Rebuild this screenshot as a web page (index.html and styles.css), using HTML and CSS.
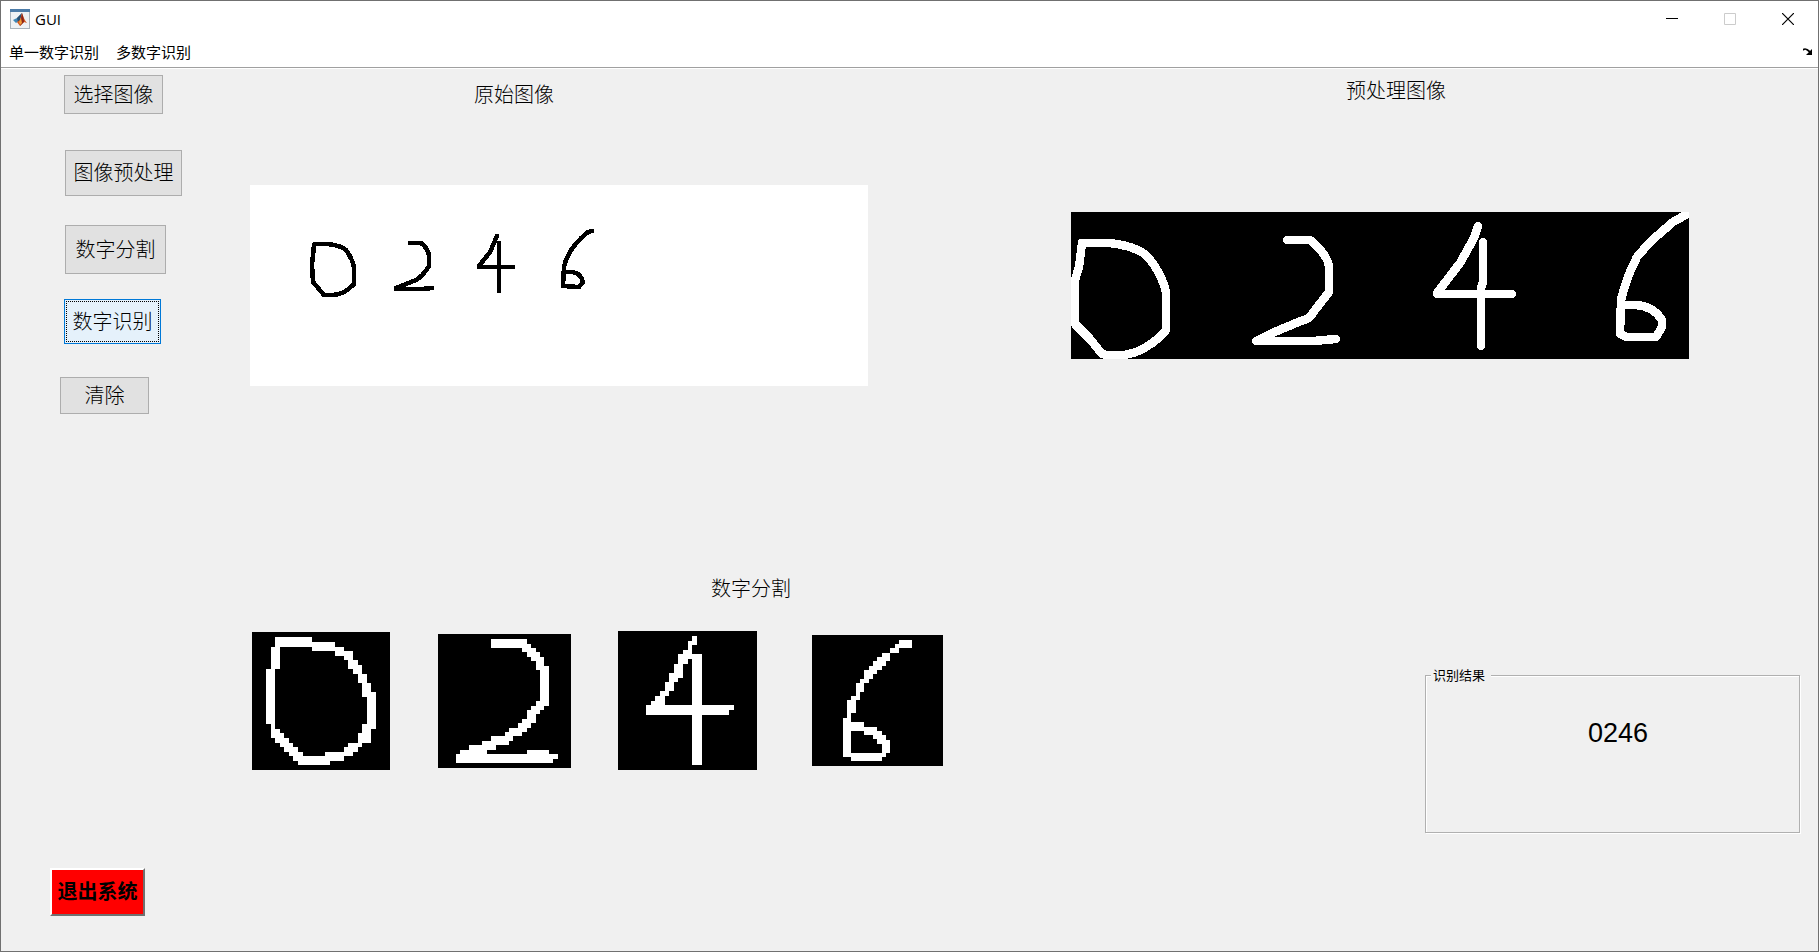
FILE: index.html
```html
<!DOCTYPE html>
<html lang="zh-CN">

<head>
    <meta charset="utf-8">
    <meta name="viewport" content="width=device-width, initial-scale=1">
    <title>GUI</title>
    <link rel="stylesheet" href="styles.css">
</head>

<body>
    <div class="window">
        <header>
            <div class="titlebar">
                <svg class="app-icon" width="20" height="20" viewBox="0 0 20 20">
                    <rect x="0.5" y="0.5" width="19" height="19" fill="#eef1f4" stroke="#a9b2bb"/>
                    <rect x="0" y="0" width="20" height="3" fill="#4c7ba8"/>
                    <path d="M3 11L7 9L10 6L12 4L9 12L6 14Z" fill="#3f86b5"/>
                    <path d="M7 9L10 6L12 4L10 12L8 13Z" fill="#284f73"/>
                    <path d="M12 4C13 7 15 12 17 14L14 13L10 17L7 13L10 11Z" fill="#d2561f"/>
                    <path d="M12 4C13 7 14 10 14 13L10 17L11 10Z" fill="#8e2418"/>
                    <path d="M11 9L12 14L10 16L9 13Z" fill="#f09a35"/>
                </svg>
                <span class="title">GUI</span>
                <div class="controls">
                    <button aria-label="最小化">
                        <svg width="12" height="12" viewBox="0 0 12 12"><path d="M0 5.5H12" stroke="#000"/></svg>
                    </button>
                    <button aria-label="最大化" disabled>
                        <svg width="12" height="12" viewBox="0 0 12 12"><path d="M.5 .5H11.5V11.5H.5Z" fill="none" stroke="#ccc"/></svg>
                    </button>
                    <button aria-label="关闭">
                        <svg width="12" height="12" viewBox="0 0 12 12"><path d="M0 0L12 12M12 0L0 12" stroke="#000" stroke-width="1.2"/></svg>
                    </button>
                </div>
            </div>
            <nav class="menubar">
                <button>单一数字识别</button>
                <button>多数字识别</button>
                <svg class="dock" width="10" height="8" viewBox="0 0 10 8">
                    <path d="M0 2C2 0 4 1 7 4" fill="none" stroke="#000" stroke-width="1.8"/>
                    <path d="M9 1V7H3Z"/>
                </svg>
            </nav>
        </header>

        <main>
            <aside class="sidebar">
                <button class="btn select">选择图像</button>
                <button class="btn preprocess">图像预处理</button>
                <button class="btn split">数字分割</button>
                <button class="btn recognize">数字识别</button>
                <button class="btn clear">清除</button>
                <button class="btn exit">退出系统</button>
            </aside>

            <div class="workspace">
                <div class="images">
                    <figure class="original">
                        <figcaption>原始图像</figcaption>
                        <svg viewBox="0 0 618 201" shape-rendering="crispEdges">
                            <rect width="618" height="201" fill="#fff"/>
                            <g fill="none" stroke="#000" stroke-width="4.5" stroke-linecap="round" stroke-linejoin="round">
                                <path d="M65 59L77 59Q90 60 96 65Q102 73 104 82V99Q94 110 82 110H74L63 97L62 80L64 60Z"/>
                                <path d="M160 58H171Q179 64 179 72V81Q172 92 166 95L146 103V104H172L182 103"/>
                                <path d="M247 51L240 67L229 81V82H263M249 58V106"/>
                                <path d="M342 46L338 47Q318 63 314 82L313 101L329 102L333 97Q331 88 322 87H314"/>
                            </g>
                        </svg>
                    </figure>
                    <figure class="processed">
                        <figcaption>预处理图像</figcaption>
                        <svg viewBox="0 0 618 147" shape-rendering="crispEdges">
                            <rect width="618" height="147" fill="#000"/>
                            <g fill="none" stroke="#fff" stroke-width="8.5" stroke-linecap="round" stroke-linejoin="round">
                                <path d="M11 31H38Q66 34 77 45Q91 62 95 80V118Q84 132 65 140L54 143H36L31 142L19 127L4 112V68L8 55Z"/>
                                <path d="M216 28H239Q256 42 258 54V80L244 98Q238 108 230 109L206 119L185 129H242L265 127"/>
                                <path d="M407 14L403 26L389 51L366 81V82H441M412 30V70L410 76V134"/>
                                <path d="M618 1L602 10L579 30L566 45Q555 66 550 88L549 122L555 125H585L591 115V108Q582 94 565 93H550"/>
                            </g>
                        </svg>
                    </figure>
                </div>

                <div class="results">
                    <section class="segments">
                        <h2>数字分割</h2>
                        <div class="tiles">
                            <svg width="138" height="138" viewBox="36 33 414 414" shape-rendering="crispEdges">
                                <path d="M105 48H216V63H285V78H312V90H339V117H354V132H366V159H381V186H393V213H408V324H393V366H366V378H354V393H339V405H312V420H270V432H174V420H159V405H147V393H132V378H120V366H105V351H93V309H78V144H93V78H105ZM120 78V144H105V324H120V336H132V351H147V366H159V378H174V393H189V405H255V393H312V378H324V366H354V336H366V309H381V228H366V186H354V159H339V144H324V117H312V105H285V90H216V78Z"/>
                            </svg>
                            <svg width="133" height="134" viewBox="54 39 399 402" shape-rendering="crispEdges">
                                <path d="M213 54H321V69H333V81H348V93H360V108H372V135H387V255H372V267H360V279H348V306H333V321H321V333H306V345H279V360H267V372H228V387H201V399H321V387H387V399H414V414H399V426H108V399H120V387H147V372H186V360H213V345H255V333H267V321H294V306H306V294H321V267H333V255H348V240H360V147H348V120H333V108H321V93H306V81H213Z"/>
                            </svg>
                            <svg width="139" height="139" viewBox="39 30 417 417" shape-rendering="crispEdges">
                                <path d="M261 45H276V72H261V99H291V252H387V267H372V282H291V432H261V282H123V252H138V240H150V225H165V210H180V183H192V156H207V129H219V99H234V87H249V60H261ZM261 114H249V129H234V171H219V183H207V210H192V225H180V252H261Z"/>
                            </svg>
                            <svg width="131" height="131" viewBox="51 222 393 393" shape-rendering="crispEdges">
                                <path d="M312 237H351V261H312V276H285V300H273V315H261V327H246V339H234V354H222V366H207V393H195V417H183V456H168V483H207V498H246V510H261V522H273V537H285V576H273V588H261V600H168V588H144V471H156V417H168V405H183V366H195V354H207V327H222V315H234V300H246V288H261V276H285V261H300V249H312ZM168 510H207V522H234V534H246V549H261V576H168Z"/>
                            </svg>
                        </div>
                    </section>

                    <fieldset class="result">
                        <legend>识别结果</legend>
                        <output>0246</output>
                    </fieldset>
                </div>
            </div>
        </main>
    </div>
</body>

</html>
```
FILE: styles.css
```css
* {
    box-sizing: border-box;
}

body {
    margin: 0;
    background: #f0f0f0;
    color: #000;
    font-family: "Noto Sans CJK SC", sans-serif;
}

button {
    margin: 0;
    padding: 0;
    border: 0;
    background: none;
    color: #000;
    font-family: inherit;
}

svg {
    display: block;
}

.window {
    display: flex;
    flex-direction: column;
    min-height: 100vh;
    border: 1px solid #707070;
}

header {
    background: #fff;
    border-bottom: 1px solid #fff;
}

.titlebar {
    display: flex;
    align-items: center;
    height: 35px;
    padding: 0 1px 0 9px;
}

.title {
    margin-left: 5px;
    font: 15px/20px "Open Sans", sans-serif;
}

.controls {
    display: flex;
    margin-left: auto;
}

.controls button {
    display: flex;
    align-items: center;
    justify-content: center;
    width: 58px;
    height: 35px;
}

.menubar {
    display: flex;
    align-items: center;
    gap: 17px;
    height: 32px;
    padding: 0 5px 0 8px;
    border-bottom: 1px solid #a0a0a0;
}

.menubar button {
    font-size: 15px;
    line-height: 22px;
}

.dock {
    margin-left: auto;
}

main {
    display: flex;
    flex: 1;
}

/* left column */
.sidebar {
    display: flex;
    flex-direction: column;
    flex: none;
    width: 249px;
    padding: 6px 0 35px;
}

.btn {
    margin-left: 63px;
    padding-bottom: 2px;
    border: 1px solid #adadad;
    background: #e1e1e1;
    font-size: 20px;
    font-weight: 300;
    line-height: 24px;
}

.select {
    width: 99px;
    height: 39px;
}

.preprocess {
    width: 117px;
    height: 46px;
    margin-top: 36px;
    margin-left: 64px;
}

.split {
    width: 101px;
    height: 49px;
    margin-top: 29px;
    margin-left: 64px;
}

.recognize {
    width: 97px;
    height: 45px;
    margin-top: 25px;
    border-color: #0078d7;
    background: #e5f1fb;
    outline: 1px dotted #000;
    outline-offset: -3px;
}

.clear {
    width: 89px;
    height: 37px;
    margin-top: 33px;
    margin-left: 59px;
}

.exit {
    width: 95px;
    height: 48px;
    margin-top: auto;
    margin-left: 49px;
    border: 2px solid;
    border-color: #fff #707070 #707070 #fff;
    background: #f00;
    font-weight: 700;
}

/* images and results */
.workspace {
    flex: 1;
}

.images {
    display: flex;
    gap: 203px;
    padding-right: 129px;
}

figure {
    flex: 1;
    margin: 0;
}

figcaption,
h2 {
    margin: 0;
    font-size: 20px;
    font-weight: 300;
    line-height: 24px;
}

figcaption {
    text-align: center;
}

figure svg {
    width: 100%;
}

.original {
    padding-top: 13px;
}

.original figcaption {
    margin-bottom: 79px;
    padding-right: 90px;
}

.processed {
    padding-top: 9px;
}

.processed figcaption {
    margin-bottom: 110px;
    padding-left: 32px;
}

.results {
    display: flex;
    justify-content: space-between;
    align-items: flex-start;
    margin-top: 190px;
    padding: 0 18px 0 2px;
}

.segments h2 {
    padding-left: 459px;
}

.tiles {
    display: grid;
    grid-template-columns: 186px 180px 194px 131px;
    align-items: center;
    margin-top: 31px;
}

.tiles svg {
    background: #000;
    fill: #fff;
    fill-rule: evenodd;
}

.result {
    width: 375px;
    height: 166px;
    margin: 91px 0 0;
    padding: 0 0 0 5px;
    border: 1px solid #b0b0b0;
    box-shadow: 1px 1px #fff, inset 1px 1px #fff;
}

.result legend {
    padding: 0 6px 0 2px;
    background: #f0f0f0;
    font-size: 13px;
    line-height: 16px;
}

.result output {
    display: block;
    margin-top: 34px;
    padding-left: 6px;
    font: 27px/32px "Liberation Sans", Arial, sans-serif;
    text-align: center;
}
```
